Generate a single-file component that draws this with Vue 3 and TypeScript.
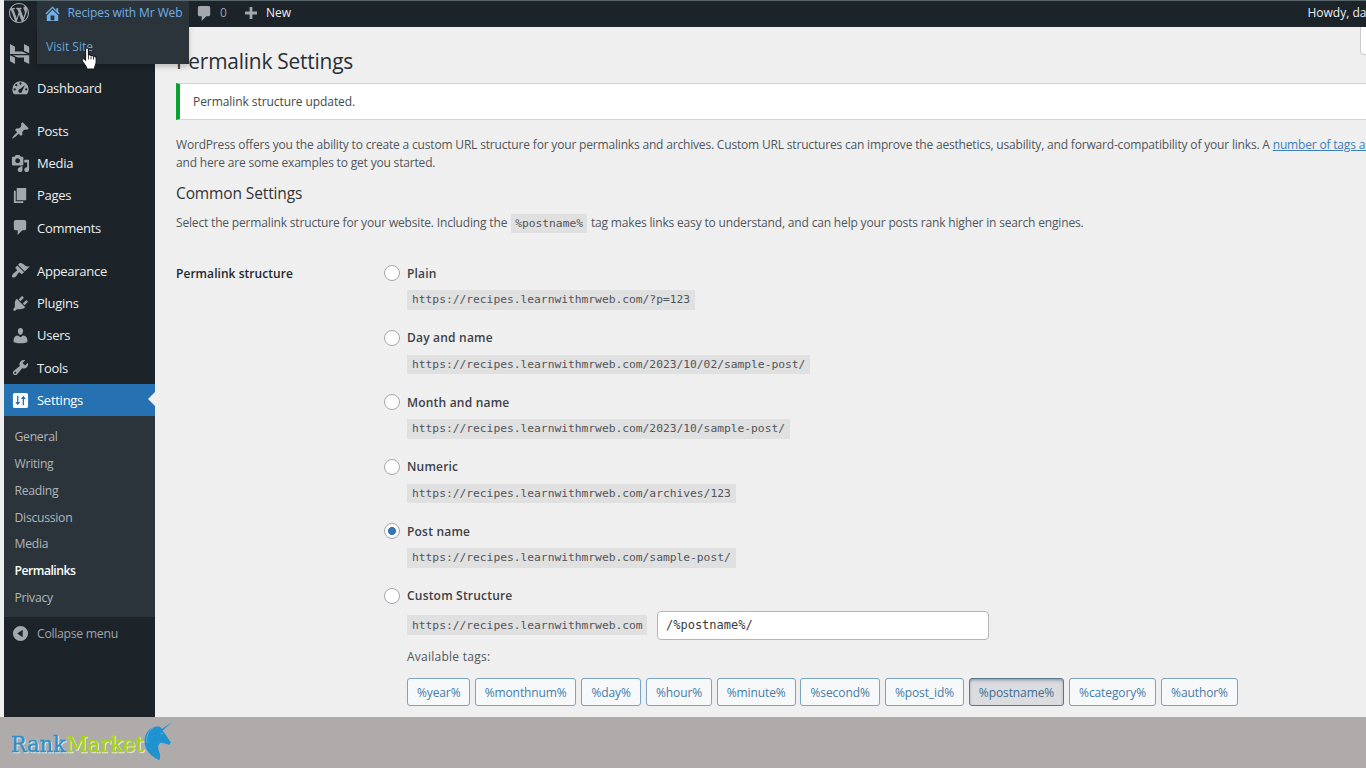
<script setup lang="ts">
interface MenuItem { label: string; path: string; gap?: boolean; active?: boolean }
interface Structure { label: string; url: string; checked?: boolean }

const menu: MenuItem[] = [
  { label: 'Dashboard', path: 'M3.2 17h13.6A8.6 8.6 0 0 0 18.6 12 8.6 8.6 0 0 0 10 3.4 8.6 8.6 0 0 0 1.4 12c0 1.9.7 3.6 1.8 5zM10 4.6a1.2 1.2 0 1 1 0 2.4 1.2 1.2 0 0 1 0-2.4zM5.6 6.4a1.2 1.2 0 1 1 0 2.4 1.2 1.2 0 0 1 0-2.4zM14.6 7.6l-2.900 6.3a2 2 0 1 1-2.1-2.2zM3.9 10.8a1.2 1.2 0 1 1 0 2.4 1.2 1.2 0 0 1 0-2.4zM16.1 10.8a1.2 1.2 0 1 1 0 2.4 1.2 1.2 0 0 1 0-2.4z' },
  { label: 'Posts', gap: true, path: 'M10.44 3.02l1.82-1.82 6.36 6.35-1.83 1.82c-1.05-.68-2.48-.57-3.41.36l-.75.75c-.92.93-1.04 2.35-.35 3.41l-1.83 1.82-2.41-2.41-2.8 2.79c-.42.42-3.38 2.71-3.8 2.29s1.86-3.39 2.28-3.81l2.79-2.79L4.1 9.36l1.83-1.82c1.05.69 2.48.57 3.4-.36l.75-.75c.93-.92 1.05-2.35.36-3.41z' },
  { label: 'Media', path: 'M13 11V4c0-.55-.45-1-1-1h-1.67L9 1H5L3.67 3H2c-.55 0-1 .45-1 1v7c0 .55.45 1 1 1h10c.55 0 1-.45 1-1zM7 4.5c1.38 0 2.5 1.12 2.5 2.5S8.38 9.5 7 9.5 4.5 8.38 4.5 7 5.62 4.5 7 4.5zM14 6h5v10.5c0 1.38-1.12 2.5-2.5 2.5S14 17.88 14 16.5s1.12-2.5 2.5-2.5c.17 0 .34.02.5.05V9h-3V6zm-4 8.05V13h2v3.5c0 1.38-1.12 2.5-2.5 2.5S7 17.88 7 16.5 8.12 14 9.5 14c.17 0 .34.02.5.05z' },
  { label: 'Pages', path: 'M6 15V2h10v13H6zm-1 1h8v2H3V5h2v11z' },
  { label: 'Comments', path: 'M5 2h9c1.1 0 2 .9 2 2v7c0 1.1-.9 2-2 2h-2l-5 5v-5H5c-1.1 0-2-.9-2-2V4c0-1.1.9-2 2-2z' },
  { label: 'Appearance', gap: true, path: 'M14.48 11.06L7.41 3.99l1.5-1.5c.5-.56 2.3-.47 3.51.32 1.21.8 1.43 1.28 2.91 2.1 1.18.64 2.45 1.26 4.45.85zm-.71.71L6.7 4.7 4.93 6.47c-.39.39-.39 1.02 0 1.41l1.06 1.06c.39.39.39 1.03 0 1.42-.6.6-1.43 1.11-2.21 1.69-.35.26-.7.53-1.01.84C1.43 14.23.4 16.08 1.4 17.07c.99 1 2.84-.03 4.18-1.36.31-.31.58-.66.85-1.02.57-.78 1.08-1.61 1.69-2.21.39-.39 1.02-.39 1.41 0l1.06 1.06c.39.39 1.02.39 1.41 0z' },
  { label: 'Plugins', path: 'M13.11 4.36L9.87 7.6 8 5.73l3.24-3.24c.35-.34 1.05-.2 1.56.32.52.51.66 1.21.31 1.55zm-8 1.77l.91-1.12 9.01 9.01-1.19.84c-.71.71-2.63 1.16-3.82 1.16H6.14L4.9 17.26c-.59.59-1.54.59-2.12 0-.59-.58-.59-1.53 0-2.12l1.24-1.24v-3.88c0-1.13.4-3.19 1.09-3.89zm7.26 3.97l3.24-3.24c.34-.35 1.04-.21 1.55.31.52.51.66 1.21.31 1.55l-3.24 3.25z' },
  { label: 'Users', path: 'M10 9.25c-2.27 0-2.73-3.44-2.73-3.44C7 4.02 7.82 2 9.97 2c2.16 0 2.98 2.02 2.71 3.81 0 0-.41 3.44-2.68 3.44zm0 2.57L12.72 10c2.39 0 4.52 2.33 4.52 4.53v2.49s-3.65 1.13-7.24 1.13c-3.65 0-7.24-1.13-7.24-1.13v-2.49c0-2.25 1.94-4.48 4.47-4.48z' },
  { label: 'Tools', path: 'M16.68 9.77c-1.34 1.34-3.3 1.67-4.95.99l-5.41 6.52c-.99.99-2.59.99-3.58 0s-.99-2.59 0-3.57l6.52-5.42c-.68-1.65-.35-3.61.99-4.95 1.28-1.28 3.12-1.62 4.72-1.06l-2.89 2.89 2.82 2.82 2.86-2.87c.53 1.58.18 3.39-1.08 4.65zM3.81 16.21c.4.39 1.04.39 1.43 0 .4-.4.4-1.04 0-1.43-.39-.4-1.03-.4-1.43 0-.39.39-.39 1.03 0 1.43z' },
  { label: 'Settings', active: true, path: 'M18 16V4c0-1.1-.9-2-2-2H4c-1.1 0-2 .9-2 2v12c0 1.1.9 2 2 2h12c1.1 0 2-.9 2-2zM6.4 5h1.4v6.5h1.9L7.1 15l-2.6-3.5h1.9zM12.3 15h1.4V8.5h1.9L13 5l-2.6 3.5h1.9z' }
]

const submenu: string[] = ['General', 'Writing', 'Reading', 'Discussion', 'Media', 'Permalinks', 'Privacy']

const structures: Structure[] = [
  { label: 'Plain', url: 'https://recipes.learnwithmrweb.com/?p=123' },
  { label: 'Day and name', url: 'https://recipes.learnwithmrweb.com/2023/10/02/sample-post/' },
  { label: 'Month and name', url: 'https://recipes.learnwithmrweb.com/2023/10/sample-post/' },
  { label: 'Numeric', url: 'https://recipes.learnwithmrweb.com/archives/123' },
  { label: 'Post name', url: 'https://recipes.learnwithmrweb.com/sample-post/', checked: true }
]

const tags: string[] = ['year', 'monthnum', 'day', 'hour', 'minute', 'second', 'post_id', 'postname', 'category', 'author']
</script>

<template>
  <div class="page">
    <header class="bar">
      <div class="wp">
        <svg viewBox="0 0 20 20"><path d="M20 10c0-5.51-4.49-10-10-10C4.48 0 0 4.49 0 10c0 5.52 4.48 10 10 10 5.51 0 10-4.48 10-10zM7.78 15.37L4.37 6.22c.55-.02 1.17-.08 1.17-.08.5-.06.44-1.13-.06-1.11 0 0-1.45.11-2.37.11-.18 0-.37 0-.58-.01C4.12 2.69 6.87 1.11 10 1.11c2.33 0 4.45.87 6.05 2.34-.68-.11-1.65.39-1.65 1.58 0 .74.45 1.36.9 2.1.35.61.55 1.36.55 2.46 0 1.49-1.4 5-1.4 5l-3.03-8.37c.54-.02.82-.17.82-.17.5-.05.44-1.25-.06-1.22 0 0-1.44.12-2.38.12-.87 0-2.33-.12-2.33-.12-.5-.03-.56 1.2-.06 1.22l.92.08 1.26 3.41zM17.41 10c.24-.64.74-1.87.43-4.25.7 1.29 1.05 2.71 1.05 4.25 0 3.29-1.73 6.24-4.4 7.78.97-2.59 1.94-5.2 2.92-7.78zM6.1 18.09C3.12 16.65 1.11 13.53 1.11 10c0-1.3.23-2.48.72-3.59C3.25 10.3 4.67 14.2 6.1 18.09zm4.03-6.63l2.58 6.98c-.86.29-1.76.45-2.71.45-.79 0-1.57-.11-2.29-.33.81-2.38 1.62-4.74 2.42-7.1z" /></svg>
      </div>
      <div class="site">
        <svg viewBox="0 0 20 20"><path d="M16 8.5l1.53 1.53-1.06 1.06L10 4.6l-6.47 6.47-1.06-1.06L10 2.5l4 4v-2h2v4zm-6-2.46l6 5.99V18H4v-5.97zM12 17v-5H8v5h4z" /></svg>
        <span>Recipes with Mr Web</span>
        <div class="drop"><span>Visit Site</span></div>
      </div>
      <div class="comments">
        <svg viewBox="0 0 20 20"><path d="M5 2h9c1.1 0 2 .9 2 2v7c0 1.1-.9 2-2 2h-2l-5 5v-5H5c-1.1 0-2-.9-2-2V4c0-1.1.9-2 2-2z" /></svg>
        <span>0</span>
      </div>
      <div class="new">
        <svg viewBox="0 0 14 14"><path d="M5.6 1h2.8v4.6H13v2.8H8.4V13H5.6V8.4H1V5.6h4.6z" /></svg>
        <span>New</span>
      </div>
      <div class="howdy">Howdy, dave</div>
    </header>

    <div class="body">
      <nav class="side">
        <div class="host">
          <svg viewBox="0 0 20 20"><path d="M0 0l5 2.7V7.6h7.2l5 2.4H0zM14 0l5.2 2.7V9.3L14 6.7zM0 11.2l5 2.5V20l-5-2.7zM2.8 11.2H19.2V20L14 17.4V13.6H7.7z" /></svg>
        </div>
        <div v-for="m in menu" :key="m.label" class="item" :class="{ gap: m.gap, active: m.active }">
          <svg viewBox="0 0 20 20"><path fill-rule="evenodd" :d="m.path" /></svg>
          <span>{{ m.label }}</span>
        </div>
        <div class="sub">
          <div v-for="s in submenu" :key="s" :class="{ current: s === 'Permalinks' }">{{ s }}</div>
        </div>
        <div class="item collapse">
          <svg viewBox="0 0 20 20"><path fill-rule="evenodd" d="M10 2a8 8 0 1 1 0 16 8 8 0 0 1 0-16zM12.3 6v8L6.5 10z" /></svg>
          <span>Collapse menu</span>
        </div>
      </nav>

      <main class="content">
        <div class="help"></div>
        <h1>Permalink Settings</h1>
        <div class="notice">Permalink structure updated.</div>
        <p class="intro">
          <span>WordPress offers you the ability to create a custom URL structure for your permalinks and archives. Custom URL structures can improve the aesthetics, usability, and forward-compatibility of your links. A <a>number of tags are available</a>,</span><br>
          <span>and here are some examples to get you started.</span>
        </p>
        <h2>Common Settings</h2>
        <p class="select">Select the permalink structure for your website. Including the <code>%postname%</code> tag makes links easy to understand, and can help your posts rank higher in search engines.</p>
        <div class="form">
          <div class="legend">Permalink structure</div>
          <div class="options">
            <div v-for="s in structures" :key="s.label" class="option">
              <label><i class="radio" :class="{ on: s.checked }"></i><b>{{ s.label }}</b></label>
              <code>{{ s.url }}</code>
            </div>
            <div class="option custom">
              <label><i class="radio"></i><b>Custom Structure</b></label>
              <div class="custom-row">
                <code>https://recipes.learnwithmrweb.com</code>
                <div class="field">/%postname%/</div>
              </div>
            </div>
            <div class="avail">Available tags:</div>
            <div class="tags">
              <button v-for="t in tags" :key="t" :class="[t, { pressed: t === 'postname' }]">%{{ t }}%</button>
            </div>
          </div>
        </div>
      </main>
    </div>

    <footer class="foot">
      <svg width="180" height="51" viewBox="0 0 180 51">
        <g class="brand">
          <text class="rank" x="11" y="35" textLength="55" lengthAdjust="spacingAndGlyphs">Rank</text>
          <text class="market" x="66" y="35" textLength="78" lengthAdjust="spacingAndGlyphs">Market</text>
        </g>
        <path class="unicorn" d="M172 5l-9.500 8.800 3 3.700 5.500 8.200-2 2-7.500-2.200c-3 1-3.800 3.500-3.200 6.500 .5 3.500 3.500 6 1 11.300C151.500 39.500 145 34 144.600 25c-.3-8 4-13.500 10-15 2.500-.7 4.400-.5 5.400-.3l2 2.300z" />
        <path class="mane" d="M153.500 10.500c-5 3-7.500 8-6.500 15.500M160.500 16l2.500 1" />
      </svg>
    </footer>

    <svg class="cursor" width="17" height="25" viewBox="0 0 17 25">
      <path d="M4.5 14V3.200C4.500 1.300 7.500 1.300 7.500 3.200V9.500C8 8.200 10 8.500 10 10c.6-1.200 2.500-.8 2.500 .6 .8-.8 2.700-.3 2.700 1.300V16c0 3-1.700 4-1.700 7H6c0-2.800-4.700-6.500-5-9-.2-1.700 2-1.700 3.500 0z" />
      <path class="fold" d="M7.500 9.500v4M10 10.500v3M12.500 11v2.500" />
    </svg>
  </div>
</template>

<style>
html, body { margin: 0; overflow: hidden; }
</style>

<style scoped>
.page { position: relative; width: 1366px; height: 768px; overflow: hidden; display: flex; flex-direction: column; background: #efefef; font-family: "Open Sans", "Noto Sans", sans-serif; font-size: 12px; color: #50565b; }
.page * { box-sizing: border-box; }
svg { display: block; flex: none; fill: #a2a8ad; }
code { font-family: "DejaVu Sans Mono", monospace; font-size: 11.3px; letter-spacing: -.02px; background: #e0e0e1; color: #50555a; }

.bar { height: 27px; flex: none; margin-left: 4px; border-top: 1px solid #59666b; background: #1c2329; display: flex; align-items: center; color: #eceeef; line-height: 24px; position: relative; z-index: 2; padding-bottom: 2px; }
.wp { width: 33px; padding-left: 5px; }
.wp svg { width: 20px; height: 20px; }
.site { position: relative; width: 152px; height: 24px; display: flex; align-items: center; padding-left: 6px; background: #2b343a; color: #72aee6; }
.site svg { width: 19px; height: 19px; margin-right: 5.500px; fill: #72aee6; }
.site > span { letter-spacing: -.1px; white-space: nowrap; }
.drop { position: absolute; left: 0; top: 24px; width: 152px; height: 39px; padding: 10px 0 0 9px; background: #2b343a; box-shadow: 0 3px 5px rgba(0,0,0,.2); line-height: 24px; color: #6ba5d8; }
.comments { display: flex; align-items: center; width: 51px; padding-left: 6px; color: #9ca2a7; }
.comments svg { width: 19px; height: 19px; margin-right: 6px; }
.new { display: flex; align-items: center; margin-left: 4px; }
.new svg { width: 14px; height: 14px; margin-right: 8px; }
.howdy { position: absolute; left: 1303.5px; top: 0; white-space: nowrap; }

.body { height: 690px; flex: none; display: flex; }
.side { margin-left: 4px; width: 151px; flex: none; background: #1c2329; color: #eceeef; font-size: 13px; letter-spacing: -.27px; }
.host { height: 44.700px; padding: 17px 0 0 6px; }
.host svg { width: 20px; height: 20px; }
.item { position: relative; height: 32.4px; display: flex; align-items: center; padding-left: 7px; }
.item svg { width: 19px; height: 19px; margin-right: 7px; }
.item span { line-height: 18px; }
.gap { margin-top: 10.4px; }
.active { background: #2571b1; color: #fff; }
.active svg { fill: #fff; }
.active::after { content: ""; position: absolute; right: 0; top: 8.5px; border: 7.6px solid transparent; border-left-width: 0; border-right-color: #efefef; }
.sub { height: 201px; background: #2b343a; padding-top: 7px; font-size: 12.2px; color: #b0b6ba; }
.sub div { height: 26.75px; line-height: 27px; padding-left: 10.5px; }
.sub .current { color: #fff; font-weight: 600; letter-spacing: -.5px; }
.collapse { color: #9fa5aa; font-size: 12.3px; letter-spacing: -.32px; }

.content { position: relative; width: 1211px; padding-left: 21px; }
.help { position: absolute; left: 1205px; top: -4px; width: 60px; height: 32px; background: #fff; border: 1px solid #c9cacc; border-radius: 4px; }
h1 { margin: 0; height: 56px; padding-top: 19px; font-size: 20.9px; letter-spacing: -.22px; line-height: 30px; font-weight: 400; color: #2a2f34; white-space: nowrap; }
.notice { height: 37px; border: 1px solid #d3d4d6; border-left: 4px solid #06a32e; border-right: 0; background: #fff; padding-left: 13px; line-height: 36px; font-weight: 500; letter-spacing: -.07px; color: #43484d; }
.intro { margin: 16px 0 0; line-height: 18px; white-space: nowrap; letter-spacing: -.178px; }
a { color: #3c7fb9; text-decoration: underline; }
h2 { margin: 8px 0 0; font-size: 15.5px; letter-spacing: -.12px; line-height: 26px; font-weight: 400; color: #2f3439; }
.select { margin: 7px 0 0; line-height: 20px; white-space: nowrap; letter-spacing: -.168px; }
.select code { padding: 3px 4px; margin: 0 1px; }
.form { display: flex; margin-top: 29.400px; }
.legend { width: 208px; flex: none; line-height: 21px; font-weight: 600; letter-spacing: .05px; color: #23282d; }
.option { height: 64.5px; }
.option label { display: flex; align-items: center; height: 20px; }
.option b { font-weight: 600; letter-spacing: .2px; color: #3c4147; }
.radio { width: 16px; height: 16px; border: 1px solid #a5a8ac; border-radius: 50%; background: #fff; margin-right: 7px; }
.radio.on { background: radial-gradient(circle at center, #3475b5 0 3.7px, #fff 4.3px); }
.option > code { display: block; width: max-content; margin: 7px 0 0 23px; height: 19.5px; line-height: 20.500px; padding: 0 5px; }
.custom { height: 61px; }
.custom-row { display: flex; align-items: center; padding: 5px 0 0 23px; }
.custom-row code { padding: 0 5px; height: 20px; line-height: 21px; width: 240px; white-space: nowrap; }
.field { margin-left: 10px; width: 332px; height: 29px; border: 1px solid #b3b5b8; border-radius: 4px; background: #fff; padding-left: 8px; font: 12px/27px "DejaVu Sans Mono", monospace; color: #383d42; }
.avail { margin-left: 23px; height: 31.400px; line-height: 20px; letter-spacing: .25px; }
.tags { display: flex; gap: 4.6px; margin-left: 23px; }
button { flex: none; height: 28px; padding: 1px 0 0; border: 1px solid #7ba3c4; border-radius: 3px; background: #f6f8f9; color: #467ca8; font: 12px/25px "Open Sans", sans-serif; letter-spacing: -.1px; text-align: center; }
.year { width: 63.4px; } .monthnum { width: 101.4px; } .day { width: 60.4px; } .hour { width: 66.2px; } .minute { width: 79px; }
.second { width: 79.6px; } .post_id { width: 79.9px; } .postname { width: 95px; } .category { width: 87.9px; } .author { width: 76.9px; }
.pressed { background: #dadce0; border-color: #57788f; color: #406d91; box-shadow: inset 0 2px 4px -2px #4c6579; }

.foot { height: 51px; flex: none; background: #afabaa; }
.foot text { font-family: "DejaVu Serif", serif; font-size: 23px; }
.brand { filter: drop-shadow(1px 1px 0 #e6e6e3); }
.rank { fill: #2d8fcb; stroke: #2d8fcb; stroke-width: .4; }
.market { fill: #a4d413; stroke: #a4d413; stroke-width: .4; }
.unicorn { fill: #1f92d0; }
.mane { fill: none; stroke: #7cc0e2; stroke-width: .7; }
.cursor { position: absolute; left: 81px; top: 46px; z-index: 3; fill: #fff; stroke: #15191c; stroke-width: 1.2; }
.fold { stroke-width: .8; }
</style>
